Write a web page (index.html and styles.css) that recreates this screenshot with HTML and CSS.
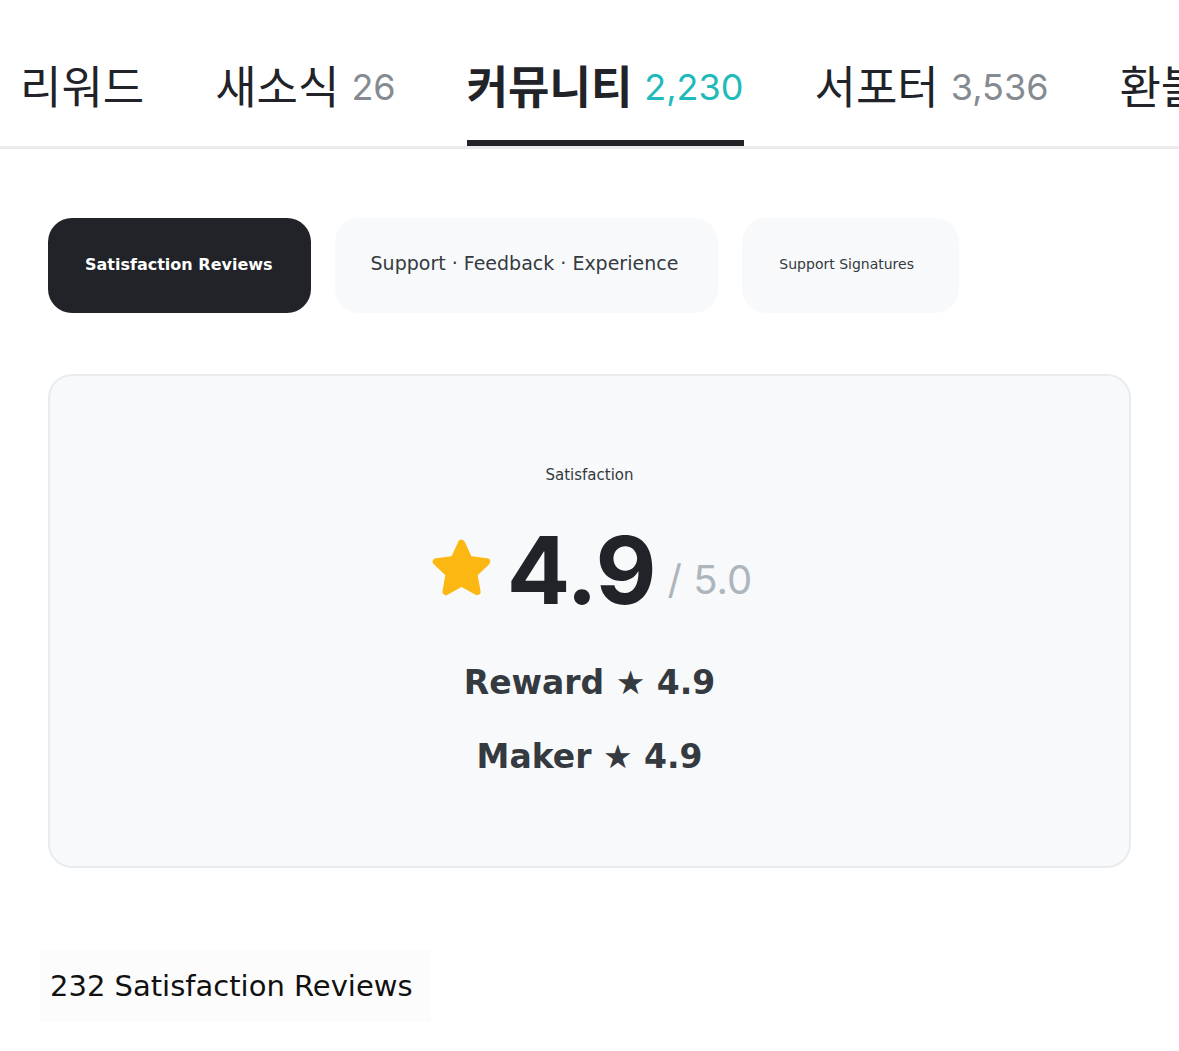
FILE: index.html
```html
<!DOCTYPE html>
<html lang="ko">
<head>
<meta charset="utf-8">
<title>커뮤니티</title>
<link rel="stylesheet" href="styles.css">
</head>
<body>
<nav class="tabs">
  <div class="tab-track">
    <a class="tab"><span class="tab-label">리워드</span></a>
    <a class="tab"><span class="tab-label">새소식</span><span class="tab-count">26</span></a>
    <a class="tab active"><span class="tab-label">커뮤니티</span><span class="tab-count">2,230</span></a>
    <a class="tab"><span class="tab-label">서포터</span><span class="tab-count">3,536</span></a>
    <a class="tab"><span class="tab-label">환불 · 정책</span></a>
  </div>
</nav>

<main class="content">
  <div class="chips">
    <button class="chip chip-active">Satisfaction Reviews</button>
    <button class="chip chip-mid">Support · Feedback · Experience</button>
    <button class="chip chip-small">Support Signatures</button>
  </div>

  <section class="summary">
    <div class="summary-label">Satisfaction</div>
    <div class="score-row">
      <svg class="score-star" viewBox="0 0 60 60" aria-hidden="true">
        <path d="M30 7 L36.6 21.2 L52 23.2 L40.8 33.9 L43.6 49.3 L30 41.8 L16.4 49.3 L19.2 33.9 L8 23.2 L23.4 21.2 Z" fill="#fdb712" stroke="#fdb712" stroke-width="6" stroke-linejoin="round"/>
      </svg>
      <span class="score-value">4.9</span>
      <span class="score-max">/ 5.0</span>
    </div>
    <div class="sub-score">Reward ★ 4.9</div>
    <div class="sub-score">Maker ★ 4.9</div>
  </section>

  <h2 class="review-count">232 Satisfaction Reviews</h2>
</main>
</body>
</html>
```

FILE: styles.css
```css
* { box-sizing: border-box; }

html, body {
  margin: 0;
  padding: 0;
  background: #ffffff;
  overflow: hidden;
}

body {
  font-family: "DejaVu Sans", sans-serif;
  color: #212529;
}

.tabs {
  border-bottom: 3px solid #ebebeb;
  overflow: hidden;
}

.tab-track {
  display: flex;
  gap: 71px;
  padding-left: 20px;
  white-space: nowrap;
}

.tab {
  display: flex;
  align-items: center;
  gap: 12px;
  flex: none;
  padding-top: 58px;
  padding-bottom: 28px;
  height: 146px;
  border-bottom: 6px solid transparent;
  font-family: Inter, "Noto Sans CJK KR", sans-serif;
  color: #212328;
  text-decoration: none;
}

.tab-label {
  font-family: "Noto Sans CJK KR", sans-serif;
  font-size: 45px;
  line-height: 54px;
  font-weight: 400;
}

.tab-count {
  font-family: Inter, sans-serif;
  font-size: 36px;
  line-height: 44px;
  color: #868b91;
  padding-top: 3px;
}

.tab.active {
  border-bottom-color: #212328;
}

.tab.active .tab-label {
  font-weight: 700;
}

.tab.active .tab-count {
  color: #1fbab9;
}

.content {
  padding: 69px 48px 0;
}

.chips {
  display: flex;
  gap: 24px;
}

.chip {
  height: 95px;
  padding: 0 37px;
  border: none;
  border-radius: 24px;
  background: #f8f9fa;
  color: #343a40;
  font-family: "DejaVu Sans", sans-serif;
  cursor: pointer;
}

.chip-active {
  background: #212328;
  color: #ffffff;
  font-weight: 700;
  font-size: 16px;
  padding: 0 38px 2px 37px;
}

.chip-mid {
  font-size: 19px;
  padding: 0 40px 6px 36px;
}

.chip-small {
  font-size: 14px;
  padding: 0 45px 4px 37px;
}

.summary {
  margin-top: 61px;
  height: 494px;
  border: 2px solid #e9ecef;
  border-radius: 24px;
  background: #f8f9fa;
  display: flex;
  flex-direction: column;
  align-items: center;
  padding-top: 89px;
}

.summary-label {
  font-size: 15px;
  line-height: 20px;
  color: #343a40;
}

.score-row {
  display: flex;
  align-items: center;
  margin-top: 30px;
  height: 110px;
}

.score-star {
  width: 69px;
  height: 69px;
  margin-right: 11px;
  margin-bottom: 2px;
}

.score-value {
  font-family: Inter, sans-serif;
  font-weight: 700;
  font-size: 94px;
  line-height: 110px;
  letter-spacing: -1px;
  color: #212328;
}

.score-max {
  font-family: Inter, sans-serif;
  font-size: 40px;
  color: #adb5bd;
  margin-left: 12px;
  padding-top: 18px;
}

.sub-score {
  font-weight: 700;
  font-size: 33px;
  line-height: 40px;
  color: #343a40;
  margin-top: 38px;
}

.sub-score + .sub-score {
  margin-top: 34px;
}

.review-count {
  display: inline-block;
  margin: 82px 0 0 -8px;
  padding: 17px 18px 17px 10px;
  font-weight: 400;
  font-size: 29px;
  line-height: 38px;
  color: #111111;
  background: #fcfcfd;
}
```
